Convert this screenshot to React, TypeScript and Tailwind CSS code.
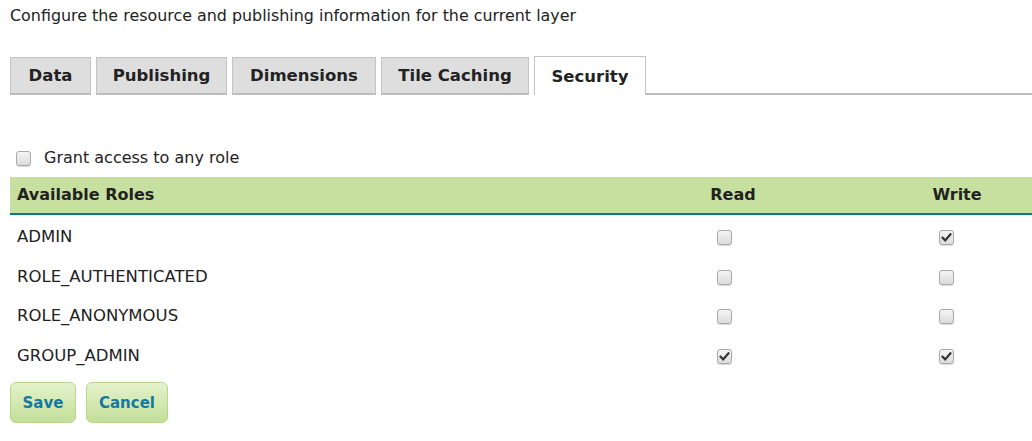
import React from "react";

function Box({ checked }: { checked?: boolean }) {
  return (
    <span className="inline-flex h-[15px] w-[15px] items-center justify-center rounded-[3px] border border-[#a9a9a9] bg-gradient-to-b from-[#f4f4f4] to-[#dcdcdc] shadow-[0_1px_1px_rgba(0,0,0,0.15)]">
      {checked && (
        <svg width="11" height="11" viewBox="0 0 11 11">
          <path d="M1.6 5.8 L4.2 8.4 L9.4 2.4" fill="none" stroke="#333" strokeWidth="2.2" strokeLinecap="square" />
        </svg>
      )}
    </span>
  );
}

const tabs: [string, string][] = [
  ["Data", "w-[81px]"],
  ["Publishing", "w-[131px]"],
  ["Dimensions", "w-[144px]"],
  ["Tile Caching", "w-[148px]"],
];
const rows: [string, boolean, boolean][] = [
  ["ADMIN", false, true],
  ["ROLE_AUTHENTICATED", false, false],
  ["ROLE_ANONYMOUS", false, false],
  ["GROUP_ADMIN", true, true],
];

export default function App() {
  return (
    <div className="h-[441px] w-[1032px] overflow-hidden bg-white text-[#222] [font-family:'DejaVu_Sans',Verdana,sans-serif]">
      <p className="pl-[10px] pt-[6px] text-[15.9px] leading-[20px]">
        Configure the resource and publishing information for the current layer
      </p>
      <div className="mt-[30px] flex items-end pl-[10px]">
        {tabs.map(([t, w]) => (
          <div
            key={t}
            className={`mr-[5px] flex h-[38px] items-center justify-center border border-b-2 border-[#c4c4c4] border-b-[#bdbdbd] bg-[#dedede] pt-[2px] text-[16.5px] font-bold ${w}`}
          >
            {t}
          </div>
        ))}
        <div className="flex h-[39px] w-[112px] items-center justify-center border border-b-0 border-[#c4c4c4] bg-white pt-[2px] text-[16.5px] font-bold">
          Security
        </div>
        <div className="h-[2px] flex-1 bg-[#bdbdbd]" />
      </div>

      <label className="mt-[51px] flex items-center pl-[16px] text-[16px]">
        <Box />
        <span className="ml-[13px]">Grant access to any role</span>
      </label>

      <div className="ml-[10px] mt-[7px]">
        <div className="grid h-[38px] grid-cols-[574px_298px_150px] items-center border-b-2 border-[#10739b] bg-[#c8e09f] text-[16px] font-bold">
          <div className="pl-[7px]">Available Roles</div>
          <div className="text-center">Read</div>
          <div className="text-center">Write</div>
        </div>
        <div className="pt-[3px]">
          {rows.map(([name, r, w]) => (
            <div key={name} className="grid h-[39.5px] grid-cols-[574px_298px_150px] items-center text-[16.5px]">
              <div className="pl-[7px]">{name}</div>
              <div className="flex justify-center pr-[18px]">
                <Box checked={r} />
              </div>
              <div className="flex justify-center pr-[22px]">
                <Box checked={w} />
              </div>
            </div>
          ))}
        </div>
      </div>

      <div className="ml-[10px] mt-[6px] flex gap-[10px]">
        <button className="h-[41px] w-[66px] rounded-[6px] border border-[#b6d88a] bg-gradient-to-b from-[#e4f2cc] to-[#c4df98] pt-[2px] text-[15px] font-bold text-[#16789f]">
          Save
        </button>
        <button className="h-[41px] w-[82px] rounded-[6px] border border-[#b6d88a] bg-gradient-to-b from-[#e4f2cc] to-[#c4df98] pt-[2px] text-[15px] font-bold text-[#16789f]">
          Cancel
        </button>
      </div>
    </div>
  );
}
